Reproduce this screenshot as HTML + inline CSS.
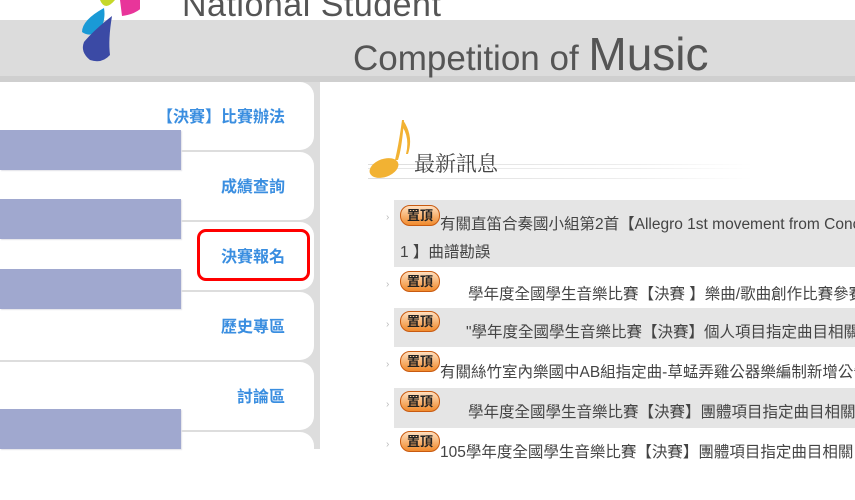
<!DOCTYPE html>
<html><head><meta charset="utf-8"><style>
*{margin:0;padding:0;box-sizing:border-box}
body{width:855px;height:449px;overflow:hidden;background:#fff;position:relative;font-family:"Liberation Sans","Noto Sans CJK TC",sans-serif}
.band{position:absolute;left:0;top:20px;width:855px;height:58px;background:#dcdcdc}
.band2{position:absolute;left:0;top:76px;width:855px;height:6px;background:#cfcfcf}
.t1{position:absolute;left:182px;top:-14px;font-size:34px;color:#555;letter-spacing:0.5px}
.t2{position:absolute;left:353px;top:27px;font-size:35px;color:#555}
.t2 b{font-weight:normal;font-size:46px}
.lp{position:absolute;left:0;top:82px;width:320px;height:367px;background:#ddd}
.tab{position:absolute;left:0;width:314px;height:68px;background:#fff;border-radius:0 14px 14px 0}
.tab span{position:absolute;right:29px;top:21px;color:#3a8ee0;font-size:16px;font-weight:bold}
.bar{position:absolute;left:0;width:181px;height:40px;background:#a0a8cf;box-shadow:1px 1px 1px #e2e2e8}
.red{position:absolute;left:197px;top:229px;width:113px;height:52px;border:3px solid #f00;border-radius:9px}
.rp{position:absolute;left:320px;top:82px;width:535px;height:367px;background:#fff;border-radius:16px 0 0 0}
.row{position:absolute;left:394px;width:461px;background:#e5e5e5}
.arr{position:absolute;left:386px;color:#bbb;font-size:10px}
.badge{position:absolute;left:400px;width:40px;height:21px;border-radius:10px;background:linear-gradient(#ffe0c0,#f08a2c);border:1px solid #c85a10;font-size:13px;font-weight:bold;color:#222;text-align:center;line-height:19px}
.tx{position:absolute;font-size:15.5px;color:#444;white-space:nowrap}
</style></head><body>
<div class="band"></div><div class="band2"></div>
<svg style="position:absolute;left:60px;top:0" width="80" height="65">
<path d="M40 0 Q45 12 55 0Z" fill="#c6d82a"/>
<path d="M60 0 L88 0 Q80 14 62 16Z" fill="#e8359a"/>
<path d="M44 8 Q46 20 40 30 Q30 38 22 32 Q22 20 44 8Z" fill="#1a9ad6"/>
<path d="M52 16 Q48 40 50 55 Q42 64 30 60 Q20 52 24 42 Q34 30 52 16Z" fill="#3b4aa5"/>
</svg>
<div class="t1">National Student</div>
<div class="t2">Competition of <b>Music</b></div>
<div class="lp"></div>
<div class="tab" style="top:82px"><span>【決賽】比賽辦法</span></div>
<div class="tab" style="top:152px"><span>成績查詢</span></div>
<div class="tab" style="top:222px"><span>決賽報名</span></div>
<div class="tab" style="top:292px"><span>歷史專區</span></div>
<div class="tab" style="top:362px"><span>討論區</span></div>
<div class="tab" style="top:432px"></div>
<div class="bar" style="top:130px"></div>
<div class="bar" style="top:199px"></div>
<div class="bar" style="top:269px"></div>
<div class="bar" style="top:409px"></div>
<div class="red"></div>
<div class="rp"></div>
<div style="position:absolute;left:368px;top:164px;width:385px;height:1px;background:linear-gradient(90deg,#ddd,#eee 70%,#fff)"></div>
<div style="position:absolute;left:368px;top:168px;width:385px;height:1px;background:linear-gradient(90deg,#e5e5e5,#eee 70%,#fff)"></div>
<div style="position:absolute;left:368px;top:178px;width:385px;height:1px;background:linear-gradient(90deg,#ddd,#eee 70%,#fff)"></div>
<svg style="position:absolute;left:366px;top:118px" width="50" height="62">
<path d="M38 2 Q36 30 32 42 L29 42 Q33 25 36 2Z" fill="#f2b233"/>
<path d="M37 2 Q48 18 42 36 L40 36 Q44 20 36 8Z" fill="#f2b233"/>
<ellipse cx="18" cy="50" rx="15" ry="9" transform="rotate(-20 18 50)" fill="#f2b233"/>
</svg>
<div class="tx" style="left:414px;top:148px;font-size:21px;color:#444;font-family:'Noto Serif CJK SC',serif">最新訊息</div>
<div class="row" style="top:200px;height:67px"></div>
<div class="row" style="top:308px;height:39px"></div>
<div class="row" style="top:388px;height:40px"></div>
<div class="arr" style="top:212px">›</div><div class="badge" style="top:205px">置頂</div>
<div class="tx" style="left:440px;top:212px">有關直笛合奏國小組第2首【Allegro 1st movement from Concerto</div>
<div class="tx" style="left:400px;top:240px">1 】曲譜勘誤</div>
<div class="arr" style="top:279px">›</div><div class="badge" style="top:271px">置頂</div>
<div class="tx" style="left:468px;top:282px">學年度全國學生音樂比賽【決賽 】樂曲/歌曲創作比賽參賽者</div>
<div class="arr" style="top:319px">›</div><div class="badge" style="top:311px">置頂</div>
<div class="tx" style="left:466px;top:320px">"學年度全國學生音樂比賽【決賽】個人項目指定曲目相關內容</div>
<div class="arr" style="top:359px">›</div><div class="badge" style="top:351px">置頂</div>
<div class="tx" style="left:440px;top:360px">有關絲竹室內樂國中AB組指定曲-草蜢弄雞公器樂編制新增公告</div>
<div class="arr" style="top:399px">›</div><div class="badge" style="top:391px">置頂</div>
<div class="tx" style="left:468px;top:400px">學年度全國學生音樂比賽【決賽】團體項目指定曲目相關內容</div>
<div class="arr" style="top:439px">›</div><div class="badge" style="top:431px">置頂</div>
<div class="tx" style="left:440px;top:440px">105學年度全國學生音樂比賽【決賽】團體項目指定曲目相關內容</div>
</body></html>
